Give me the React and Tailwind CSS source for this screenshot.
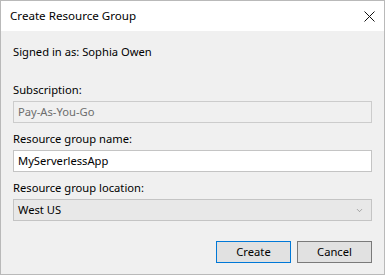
import { ChevronDown } from 'lucide-react';

const Field = ({ label, children }) => (
  <div className="mb-[8px]">
    <div className="h-[16px] leading-[16px] text-[11.2px] text-black">{label}</div>
    <div className="mt-[3px]">{children}</div>
  </div>
);

export default function App() {
  return (
    <div
      className="w-[385px] h-[275px] bg-[#f0f0f0] border border-[#b9b9b9] flex flex-col overflow-hidden"
      style={{ fontFamily: '"Segoe UI", "Noto Sans", "Open Sans", sans-serif' }}
    >
      <div className="h-[30px] bg-white flex items-center justify-between pl-[9px] pr-[9px]">
        <span className="text-[11.6px] text-black">Create Resource Group</span>
        <svg width="11" height="11" viewBox="0 0 11 11" className="text-[#111]">
          <path d="M0.5 0.5 L10.5 10.5 M10.5 0.5 L0.5 10.5" stroke="currentColor" strokeWidth="1" fill="none" />
        </svg>
      </div>

      <div className="px-[12px] pt-[13px]">
        <div className="h-[16px] leading-[16px] text-[11.2px] text-black mb-[22px]">Signed in as: Sophia Owen</div>

        <Field label="Subscription:">
          <div className="h-[22px] border border-[#cccccc] bg-[#f0f0f0] px-[4px] flex items-center text-[11.2px] text-[#6d6d6d]">
            Pay-As-You-Go
          </div>
        </Field>

        <Field label="Resource group name:">
          <div className="h-[22px] border border-[#c4c4c4] bg-white px-[4px] flex items-center text-[11.2px] text-black">
            MyServerlessApp
          </div>
        </Field>

        <Field label="Resource group location:">
          <div className="h-[22px] border border-[#c4c4c4] bg-[#e8e8e8] pl-[4px] pr-[7px] flex items-center justify-between text-[11.2px] text-black">
            <span>West US</span>
            <ChevronDown className="w-[9px] h-[9px] text-[#777]" strokeWidth={1.6} />
          </div>
        </Field>

        <div className="flex justify-end gap-[6px] mt-[20px]">
          <button className="w-[75px] h-[22px] border border-[#0078d7] bg-[#e1e1e1] text-[11.2px] text-black">Create</button>
          <button className="w-[75px] h-[22px] border border-[#7a7a7a] bg-[#e1e1e1] text-[11.2px] text-black">Cancel</button>
        </div>
      </div>
    </div>
  );
}
